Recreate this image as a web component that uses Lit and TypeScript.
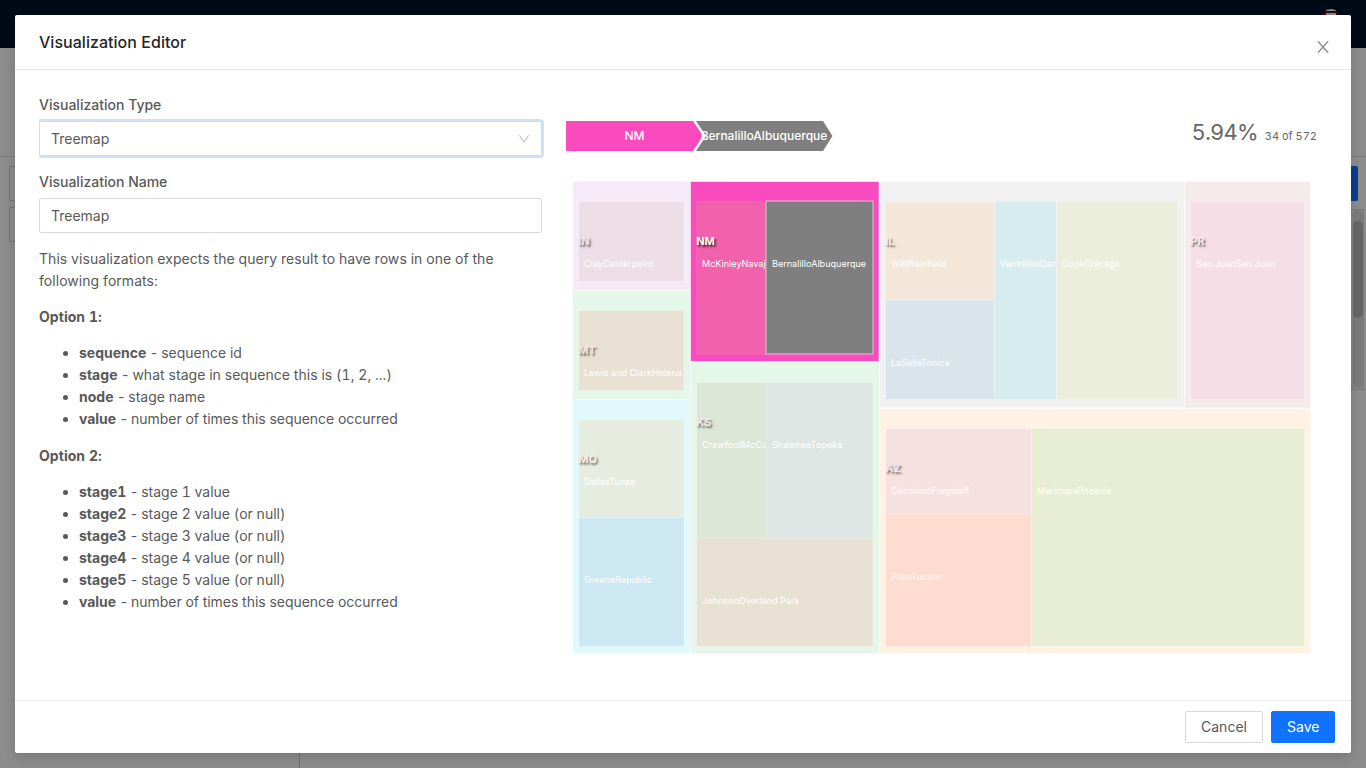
import { LitElement, html, svg, css } from "lit";
import { customElement } from "lit/decorators.js";

interface Cell { x: number; y: number; w: number; h: number; fill: string; label: string; active?: boolean; }
interface Region extends Cell { ink: string; cells: Cell[]; }

const regions: Region[] = [
  { x: 572.5, y: 181.5, w: 118, h: 109, fill: "#f6eaf8", label: "IN", ink: "#f0e8ea", cells: [
    { x: 578.5, y: 201.5, w: 105.5, h: 80, fill: "#ecdde6", label: "ClayCenterpoint" } ] },
  { x: 572.5, y: 290.5, w: 118, h: 109, fill: "#e5f7e8", label: "MT", ink: "#fbe6e2", cells: [
    { x: 578.5, y: 310.5, w: 105.5, h: 80, fill: "#e8e0d3", label: "Lewis and ClarkHelena" } ] },
  { x: 572.5, y: 399.5, w: 118, h: 254, fill: "#e1f8fd", label: "MO", ink: "#fdeee2", cells: [
    { x: 578.5, y: 419.5, w: 105.5, h: 98, fill: "#e7ece0", label: "DallasTunas" },
    { x: 578.5, y: 517.5, w: 105.5, h: 129, fill: "#cce8f3", label: "GreeneRepublic" } ] },
  { x: 690.5, y: 362, w: 189, h: 291.5, fill: "#e5f7e8", label: "KS", ink: "#f6eef0", cells: [
    { x: 696.5, y: 382.5, w: 69.5, h: 155.5, fill: "#dbe6d6", label: "CrawfordMcCu" },
    { x: 766, y: 382.5, w: 107, h: 155.5, fill: "#dde6e3", label: "ShawneeTopeka" },
    { x: 696.5, y: 538, w: 176.5, h: 108.5, fill: "#e8e0d3", label: "JohnsonOverland Park" } ] },
  { x: 879.5, y: 181.5, w: 305, h: 226.5, fill: "#f1f1f1", label: "IL", ink: "#fff3e6", cells: [
    { x: 885.5, y: 201.5, w: 109, h: 98.5, fill: "#f5e6da", label: "WillPlainfield" },
    { x: 885.5, y: 300, w: 109, h: 99.5, fill: "#dae5eb", label: "LaSalleTonica" },
    { x: 994.5, y: 201.5, w: 62, h: 198, fill: "#d7ecef", label: "VermilionDan" },
    { x: 1056.5, y: 201.5, w: 121, h: 198, fill: "#ebeedb", label: "CookChicago" } ] },
  { x: 1184.5, y: 181.5, w: 126, h: 226.5, fill: "#f5ebea", label: "PR", ink: "#fbeef2", cells: [
    { x: 1190.5, y: 201.5, w: 114, h: 198, fill: "#f5dee6", label: "San JuanSan Juan" } ] },
  { x: 879.5, y: 408.5, w: 431, h: 245, fill: "#fff2e4", label: "AZ", ink: "#ece8f6", cells: [
    { x: 885.5, y: 428.5, w: 146, h: 85.5, fill: "#f7e1e0", label: "CoconinoFlagstaff" },
    { x: 885.5, y: 514, w: 146, h: 132.5, fill: "#ffdcd0", label: "PimaTucson" },
    { x: 1031.5, y: 428.5, w: 273, h: 218, fill: "#e6edd3", label: "MaricopaPhoenix" } ] },
  { x: 690.5, y: 181.5, w: 188.5, h: 180, fill: "#fa4bbe", label: "NM", ink: "#fffde8", active: true, cells: [
    { x: 696.5, y: 201, w: 69.5, h: 153.5, fill: "#f261ab", label: "McKinleyNavaj" },
    { x: 766, y: 201, w: 107, h: 153, fill: "#7f7f7f", label: "BernalilloAlbuquerque", active: true } ] },
];

@customElement("treemap-chart")
class TreemapChart extends LitElement {
  static styles = css`
    :host { display: block; }
    svg { display: block; font-family: Inter, sans-serif; }
    .rect { stroke: #fff; stroke-opacity: .5; stroke-width: 1; }
    .leaf { stroke-opacity: .25; }
    .hot { stroke-opacity: .6; }
    .leaf.sub { stroke-opacity: .06; }
    .name { font-size: 9px; letter-spacing: .03px; fill: #fff; }
    .title { font-size: 11px; font-weight: 700; opacity: .85; text-shadow: 1.5px 1.5px 2px rgba(0,0,0,.6); }
    .title.on { opacity: 1; text-shadow: 1.5px 1.5px 2px rgba(0,0,0,.7); }
  `;
  render() {
    return html`<svg width="751" height="485" viewBox="566 175 751 485">
      ${regions.map((r, i) => svg`
        <rect class="rect ${r.active ? "hot" : ""}" x=${r.x} y=${r.y} width=${r.w} height=${r.h} fill=${r.fill}></rect>
        ${r.cells.map((c, j) => svg`
          <clipPath id="c${i}-${j}"><rect x=${c.x} y=${c.y} width=${c.w} height=${c.h}></rect></clipPath>
          <rect class="rect leaf ${c.active ? "hot" : r.active ? "sub" : ""}" x=${c.x} y=${c.y} width=${c.w} height=${c.h} fill=${c.fill}></rect>
          <text class="name" clip-path="url(#c${i}-${j})" x=${Math.floor(c.x + 6)} y=${Math.round(c.y + 65.5)}>${c.label}</text>`)}
        <text class="title ${r.active ? "on" : ""}" x=${r.x + 5.7} y=${Math.ceil(r.y + 63.2)}  fill=${r.ink}>${r.label}</text>`)}
    </svg>`;
  }
}

@customElement("app-root")
class AppRoot extends LitElement {
  static styles = css`
    :host { display: block; width: 1366px; height: 768px; overflow: hidden; position: relative; background: #8c8c8c; font: 14px/22px Inter, sans-serif; font-variant-numeric: tabular-nums; color: #595959; }
    * { box-sizing: border-box; }
    .bar { height: 48px; background: #000a17; }
    .back { position: absolute; inset: 0; }
    .avatar { position: absolute; left: 1321px; top: 9px; width: 20px; height: 20px; border-radius: 50%; background: #2b0d10; overflow: hidden; }
    .avatar::before { content: ""; display: block; width: 10px; height: 2px; margin: 0 auto; background: #888; }
    .avatar::after { content: ""; display: block; width: 10px; height: 4px; margin: 2px auto 0; background: #888; }
    .rule { position: absolute; left: 0; right: 0; top: 156px; height: 1px; background: #7b7b7b; }
    .slot { position: absolute; left: 9px; width: 40px; height: 35px; border: 1px solid #767676; border-radius: 2px; }
    .one { top: 166px; } .two { top: 207px; }
    .blue { position: absolute; left: 1300px; top: 166px; width: 58px; height: 35px; background: #083e8e; border-radius: 2px; }
    .track { position: absolute; left: 1340px; top: 209px; width: 24px; height: 179px; border: 1px solid #7b7b7b; background: #858585; }
    .thumb { position: absolute; left: 1353px; top: 221px; width: 10px; height: 97px; border-radius: 5px; background: #666; }
    .groove { position: absolute; left: 1353px; top: 210px; width: 10px; height: 177px; border-radius: 5px; background: #7b7b7b; }
    .edge { position: absolute; right: 0; top: 389px; width: 30px; height: 1px; background: #767676; }
    .col { position: absolute; left: 299px; top: 740px; width: 1px; height: 28px; background: #707070; }
    .modal { position: absolute; left: 15px; top: 15px; width: 1336px; height: 738px; background: #fff; border-radius: 2px; box-shadow: 0 4px 12px rgba(0,0,0,.15); display: flex; flex-direction: column; }
    header { height: 55px; border-bottom: 1px solid #e8e8e8; padding: 0 21px 0 24px; display: flex; justify-content: space-between; font-size: 16px; font-weight: 500; line-height: 54px; color: #262626; letter-spacing: .03px; }
    .close { width: 14px; height: 14px; margin-top: 25px; }
    main { flex: 1; display: flex; padding: 24px; gap: 23px; }
    .form { width: 504px; }
    label { display: block; font-weight: 500; line-height: 22px; }
    .field { width: 503px; height: 35px; border: 1px solid #d9d9d9; border-radius: 2px; padding: 0 11px; display: flex; align-items: center; justify-content: space-between; }
    .focus { margin: 5px 0 15px; box-shadow: 0 0 0 2px #cfe2fb; clip-path: inset(-2px -2px -2px 0); }
    .name-field { margin: 5px 0 15px; }
    p { margin: 0 0 14px; letter-spacing: .05px; }
    ul { margin: 0 0 15px; padding-left: 40px; }
    .tight { letter-spacing: -.02px; }
    .loose { letter-spacing: .04px; }
    .dash { letter-spacing: -.6px; }
    b { font-weight: 700; }
    .viz { flex: 1; }
    .top { display: flex; justify-content: space-between; margin-top: 27px; height: 54px; }
    .crumbs { font-size: 12px; font-weight: 500; font-family: Inter, sans-serif; }
    .stat { display: flex; align-items: baseline; gap: 7px; color: #666; padding-right: 10px; }
    .big { font-size: 22px; letter-spacing: -.8px; }
    .small { font-size: 11px; }
    footer { height: 53px; border-top: 1px solid #e8e8e8; padding: 10px 16px; display: flex; justify-content: flex-end; gap: 8px; }
    .btn { height: 32px; border: 1px solid #d9d9d9; border-radius: 2px; background: #fff; padding: 0 15px; font: inherit; color: #595959; }
    .cancel { width: 78px; }
    .save { width: 64px; background: #0f73ff; border-color: #0f73ff; color: #fff; }
  `;
  render() {
    const row = (k: string, v: string) => html`<li class=${k === "value" ? "tight" : k === "stage" ? "loose" : ""}><b>${k}</b><span class="dash"> - </span>${v}</li>`;
    return html`
      <div class="back">
        <div class="bar"></div><div class="avatar"></div><div class="rule"></div>
        <div class="slot one"></div><div class="slot two"></div><div class="blue"></div>
        <div class="track"></div><div class="groove"></div><div class="thumb"></div>
        <div class="edge"></div><div class="col"></div>
      </div>
      <div class="modal">
        <header><span>Visualization Editor</span>
          <svg class="close" viewBox="0 0 14 14" fill="none" stroke="#8c8c8c" stroke-width="1.3"><path d="M1.8 1.2 12.2 12.8M12.2 1.2 1.8 12.8"/></svg>
        </header>
        <main>
          <section class="form">
            <label>Visualization Type</label>
            <div class="field focus"><span>Treemap</span>
              <svg width="12" height="12" viewBox="0 0 12 12" fill="none" stroke="#bfbfbf" stroke-width="1.1"><path d="M1.3 2.2 6 9 10.7 2.2"/></svg>
            </div>
            <label>Visualization Name</label>
            <div class="field name-field"><span>Treemap</span></div>
            <p>This visualization expects the query result to have rows in one of the following formats:</p>
            <p><b>Option 1:</b></p>
            <ul>${row("sequence", "sequence id")}${row("stage", "what stage in sequence this is (1, 2, ...)")}${row("node", "stage name")}${row("value", "number of times this sequence occurred")}</ul>
            <p><b>Option 2:</b></p>
            <ul>${[1, 2, 3, 4, 5].map((n) => row(`stage${n}`, `stage ${n} value${n > 1 ? " (or null)" : ""}`))}${row("value", "number of times this sequence occurred")}</ul>
          </section>
          <section class="viz">
            <div class="top">
              <svg class="crumbs" width="268" height="30" viewBox="0 0 268 30" text-anchor="middle">
                <path fill="#fa4bbe" d="M0 0H127L137 15 127 30H0z"/>
                <path fill="#7f7f7f" d="M130 0H257L266.5 15 257 30H130L140 15z"/>
                <text x="68.5" y="19" fill="#fff">NM</text>
                <text x="198" y="19" fill="#fff">BernalilloAlbuquerque</text>
              </svg>
              <div class="stat"><span class="big">5.94%</span><span class="small">34 of 572</span></div>
            </div>
            <treemap-chart></treemap-chart>
          </section>
        </main>
        <footer><button class="btn cancel">Cancel</button><button class="btn save">Save</button></footer>
      </div>`;
  }
}
